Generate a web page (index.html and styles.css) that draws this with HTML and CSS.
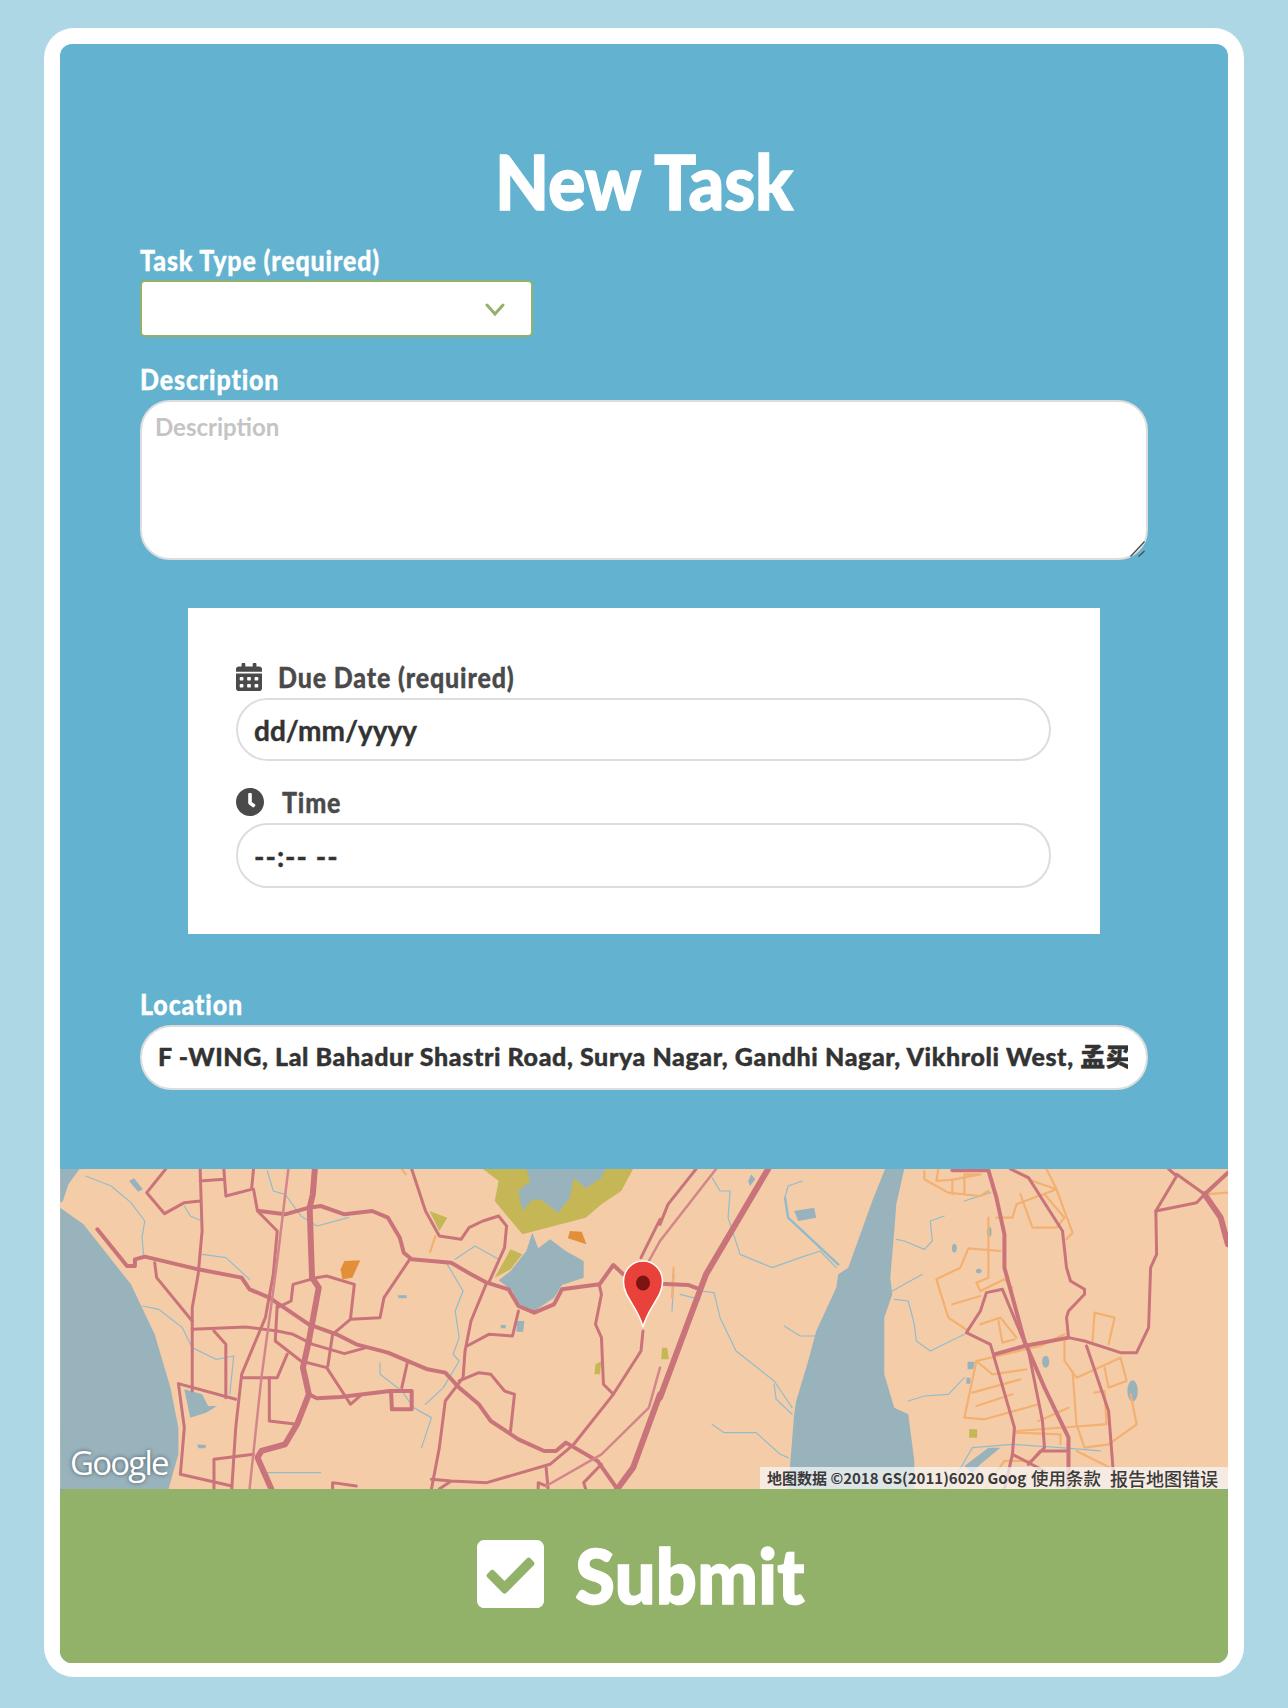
FILE: index.html
```html
<!DOCTYPE html>
<html lang="en">
<head>
<meta charset="utf-8">
<title>New Task</title>
<link rel="stylesheet" href="styles.css">
</head>
<body>
<main class="card">
  <div class="inner">
    <form class="form">
      <h1 class="title"><span>New Task</span></h1>
      <label class="label"><span>Task Type (required)</span></label>
      <div class="select"><svg class="chev" viewBox="0 0 20 14"><path d="M2 2l8 9 8-9" fill="none" stroke="#93b169" stroke-width="3" stroke-linecap="round"/></svg></div>
      <label class="label gap-a"><span>Description</span></label>
      <div class="area-wrap">
        <textarea class="area" placeholder="Description"></textarea>
        <svg class="grip" viewBox="0 0 15 16"><path d="M.5 15.500 14.500.5M8.500 15.500 14.500 10" fill="none" stroke="#4a4a4a" stroke-width="1.200"/></svg>
      </div>
      <section class="panel">
        <label class="label dark"><svg class="ico cal" viewBox="0 0 448 512" preserveAspectRatio="none"><path d="M0 464c0 26.5 21.5 48 48 48h352c26.5 0 48-21.5 48-48V192H0v272zm320-196c0-6.6 5.4-12 12-12h40c6.6 0 12 5.4 12 12v40c0 6.6-5.4 12-12 12h-40c-6.6 0-12-5.4-12-12v-40zm0 128c0-6.6 5.4-12 12-12h40c6.6 0 12 5.4 12 12v40c0 6.6-5.4 12-12 12h-40c-6.6 0-12-5.4-12-12v-40zM192 268c0-6.6 5.4-12 12-12h40c6.6 0 12 5.4 12 12v40c0 6.6-5.4 12-12 12h-40c-6.6 0-12-5.4-12-12v-40zm0 128c0-6.6 5.4-12 12-12h40c6.6 0 12 5.4 12 12v40c0 6.6-5.4 12-12 12h-40c-6.6 0-12-5.4-12-12v-40zM64 268c0-6.6 5.4-12 12-12h40c6.6 0 12 5.4 12 12v40c0 6.6-5.4 12-12 12H76c-6.6 0-12-5.4-12-12v-40zm0 128c0-6.6 5.4-12 12-12h40c6.6 0 12 5.4 12 12v40c0 6.6-5.4 12-12 12H76c-6.6 0-12-5.4-12-12v-40zM400 64h-48V16c0-8.8-7.2-16-16-16h-32c-8.8 0-16 7.2-16 16v48H160V16c0-8.8-7.2-16-16-16h-32c-8.8 0-16 7.2-16 16v48H48C21.5 64 0 85.5 0 112v48h448v-48c0-26.5-21.5-48-48-48z"/></svg><span>Due Date (required)</span></label>
        <input class="pill date" type="text" value="dd/mm/yyyy">
        <label class="label dark gap-b"><svg class="ico clk" viewBox="8 8 496 496"><path d="M256,8C119,8,8,119,8,256S119,504,256,504,504,393,504,256,393,8,256,8Zm92.49,313h0l-20,25a16,16,0,0,1-22.49,2.5h0l-67-49.72a40,40,0,0,1-15-31.23V112a16,16,0,0,1,16-16h32a16,16,0,0,1,16,16V256l58,42.5A16,16,0,0,1,348.49,321Z"/></svg><span>Time</span></label>
        <input class="pill time" type="text" value="--:-- --">
      </section>
      <label class="label gap-c"><span>Location</span></label>
      <input class="pill loc" type="text" value="F -WING, Lal Bahadur Shastri Road, Surya Nagar, Gandhi Nagar, Vikhroli West, 孟买, 马哈拉施特拉邦 400079 印度">
    </form>
    <div class="map">
      <svg class="map-svg" viewBox="0 0 1168 320" aria-hidden="true">
        <rect width="1168" height="320" fill="#f5cca8"/>
        <g transform="matrix(.3954 0 0 .3333 -20 -8)">
          <g fill="#99b3bd">
            <path d="M51 140 110 190 170 280 230 370 290 520 330 680 350 800 350 880 325 984H51Z"/>
            <path d="M51 24H100L72 70 58 120 51 125Z"/>
            <path d="M225 60 238 52 260 85 248 92Z"/>
            <path d="M365 685 410 700 425 735 448 735 420 755 380 770Z"/>
            <path d="M398 850 420 852 418 862 400 862Z"/>
            <path d="M905 403H927V412H907Z M1205 480H1225L1222 512H1205Z M1165 492H1178V502H1165Z"/>
          </g>
          <path d="M1120 24H1500L1470 90 1420 130 1380 170 1220 220 1150 120 1160 60Z" fill="#c6b756"/>
          <path d="M1230 24H1430L1420 50 1380 82 1350 50 1340 110 1310 155 1270 118 1245 115 1220 150 1210 90 1240 60Z" fill="#99b3bd"/>
          <path d="M1245 215 1260 262 1290 235 1330 270 1375 300 1375 350 1320 372 1300 410 1250 450 1210 430 1195 390 1160 358 1190 330 1230 270Z" fill="#99b3bd"/>
          <g fill="#c6b756">
            <path d="M985 150 1030 170 1010 210Z"/>
            <path d="M1190 265 1220 280 1190 325 1150 350Z"/>
            <path d="M1405 610 1420 600 1416 640H1402Z"/>
          </g>
          <g fill="#e38f3a">
            <path d="M770 300 810 298 790 350 765 355 760 325Z"/>
            <path d="M1340 210 1370 212 1382 250 1335 232Z"/>
          </g>
          <g class="river">
            <path d="M115 45 180 75 230 125 265 180 258 230 262 280M260 435 300 445 360 500 385 560 445 595 490 585 480 700"/>
            <path d="M365 135 380 165 410 180M410 280 470 290 530 355M575 30 590 90 620 100 660 165 700 195 780 170"/>
            <path d="M860 605 860 640 915 690 945 740 990 770 965 860M1030 310 1070 390 1050 450 1060 530 1045 580 1060 600 1020 680 975 730"/>
            <path d="M1050 295 1100 255 1160 295M570 935H710"/>
          </g>
          <path class="road-orange" d="M915 24 925 40M1000 225 987 272"/>
          <g class="road">
            <path class="w5" d="M695 24 690 100 682 140 688 350 705 380 680 540 665 620 680 700 650 790 620 850 560 870 550 890 585 984"/>
            <path d="M318 24 270 95 315 158 365 125 405 120M405 24 410 210 400 340 385 440 385 690M405 60 465 55M465 24 470 105 535 85 540 24"/>
            <path d="M540 85 550 150 600 210 590 340 570 470 510 640 495 800 485 984"/>
            <path class="w4" d="M555 150 620 160 680 140 710 135 770 160 840 150 880 170 910 230 920 275 940 295 1040 305 1090 340 1130 365 1185 385 1210 435 1250 455 1300 430 1320 385 1415 370 1450 312 1475 340"/>
            <path class="w4" d="M145 205 220 315 240 315 240 295 265 287 400 325 510 350 530 385 580 410 680 490 750 520 800 550 880 575 980 625 1025 635 1060 680 1110 730 1140 780 1210 835 1275 870 1305 870 1330 845 1410 900 1460 984"/>
            <path d="M290 305 295 350 385 480M385 505 520 498 600 510 640 520 690 550 770 578 825 560M440 510 470 550 470 710M350 668 495 715M350 668 365 800 355 940 485 975"/>
            <path d="M510 650 600 650 625 580M600 430 595 540 660 600 725 620 780 720M700 350 640 370 635 420 600 440M700 350 725 345 795 370 785 475 860 470 870 410 935 295M785 475 740 520 728 615"/>
            <path class="w4" d="M680 700 700 712 760 708 885 690 940 690 940 745 890 745 888 695"/>
            <path d="M780 720 785 730 810 705M580 650 580 780 650 790M930 600 915 680M1200 700 1190 810M1060 660 1110 635 1140 640 1175 690 1200 700"/>
            <path d="M1130 365 1090 480 1075 570 1070 650 1025 720 1010 860 990 984M1180 195 1160 165 1120 180 1085 200 1065 235 1010 225 975 150 940 24M1180 195 1175 260 1135 365M1080 555 1135 520 1195 525 1210 450"/>
            <path d="M1415 375 1420 400 1405 490 1420 530 1425 670 1450 700M1525 510 1520 570 1450 700 1350 850 1290 910 1130 965 1040 960 990 955M1040 960 1010 984M440 895 540 880M440 895 440 984M740 984 740 965 800 975"/>
            <path d="M1260 984 1260 965 1280 975M1280 920 1285 984M1380 984 1375 965 1420 910"/>
            <path class="w5" d="M1568 700 1500 920 1460 984"/>
            <path d="M1568 175 1520 290"/>
          </g>
          <path class="road-light" d="M628 24 600 300 560 650 530 984M1568 620 1540 740 1420 880 1280 975M1568 240 1540 300"/>
        </g>
        <g transform="matrix(.4005 0 0 .3333 600 -8)">
          <path d="M562 24H610L590 130 585 210 575 350 580 400 560 470 560 640 585 740 620 760 635 900 635 984H320L335 760 340 720 370 600 390 510 440 380 445 340 470 320 530 120Z" fill="#99b3bd"/>
          <g fill="#99b3bd">
            <path d="M335 150 385 140 390 170 345 180Z"/>
            <ellipse cx="822" cy="212" rx="6" ry="15"/><ellipse cx="735" cy="262" rx="6" ry="13"/><ellipse cx="963" cy="602" rx="9" ry="18"/><ellipse cx="1180" cy="690" rx="13" ry="32"/><ellipse cx="796" cy="330" rx="7" ry="7"/>
            <path d="M768 602H786L782 625H768Z M765 650H775V668H765Z M228 40 238 55 225 75 220 60Z"/>
            <path d="M760 915 820 860 850 860 800 910 780 935Z"/>
          </g>
          <g fill="#c6b756"><path d="M772 805H792V830H772Z M5 560 18 560 22 595 3 595Z"/></g>
          <g class="river">
            <path d="M130 50 150 90 175 90 170 170 200 280 280 320 350 290 400 270 440 320M312 110 320 75 355 60M100 390 135 395 150 470 190 570 285 660 330 740M285 670 290 715 330 760M130 790 160 815 240 815 300 880 320 890"/>
            <path class="rw" d="M312 110 320 170 400 260 445 310"/>
            <path d="M585 415 620 420 635 490 640 540 675 570 760 520M590 235 610 240 660 265 680 240 675 180 710 165M580 390 655 340M620 720 660 705 720 700 760 650M310 495 350 525 390 525"/>
            <path d="M720 984 780 860 880 850 1000 860 1100 870M760 120 825 95M35 340 30 450M50 400 100 415"/>
          </g>
          <g class="road-orange">
            <path d="M660 30 660 55 720 95 800 105 820 90M695 24 690 60 735 55 800 40 760 40 760 100M730 55 730 100M875 24 930 60 990 85 890 130 880 170 840 170"/>
            <path d="M900 100 930 200 990 200 1010 170 960 100M965 24 990 85 1030 215 1015 235M850 270 770 262 750 320 690 355 720 470 770 510M820 170 820 350 790 365 800 390 860 355 880 380"/>
            <path d="M730 430 800 405M800 490 850 470 890 530M845 480 855 545 885 535M1080 540 1085 455 1135 470 1120 550M790 600 760 770 810 775 945 730M790 600 950 555 1010 520M780 695 900 655M790 735 880 700M790 600 830 640 915 625"/>
            <path d="M1010 540 1010 600 1040 650 1150 590 1165 660 1120 680 1110 620M1030 630 1040 790 1060 860 1120 850 1190 790 1175 700M890 810 1110 790M1085 695 1110 690 1115 790M885 815 1000 820 1000 850M1020 740 945 780"/>
            <path d="M1360 100 1418 95M810 984 860 900 930 900M1040 870 1140 930M34 320 30 410"/>
          </g>
          <g class="road">
            <path class="w5" d="M270 24 115 340 0 710"/>
            <path d="M90 24 20 130 0 190"/>
            <path class="w4" d="M0 368 70 372 100 385"/>
            <path class="w4" d="M730 28H820L840 110 860 220 860 320 910 540 960 680 1020 830 1020 984"/>
            <path d="M875 24 920 50 1005 210 1015 320 1025 360 1060 385 1060 400 1020 450 1015 470 1020 530 1060 540 1150 575 1190 575 1220 500 1225 320 1240 280 1238 150 1290 45 1270 24"/>
            <path d="M1238 150 1340 125 1360 100 1290 40"/>
            <path class="w4" d="M1360 100 1418 35"/>
            <path class="w5" d="M1360 100 1400 170 1418 250"/>
            <path d="M765 515 800 450 815 395 855 385 910 545M765 515 825 550 885 800 880 880 860 984"/>
            <path class="w4" d="M835 580 910 555 1020 530"/>
            <path d="M920 570 955 780 960 860 920 910M1065 555 1120 750 1135 984M880 880 960 930M920 910 950 870 1020 870"/>
          </g>
          <path class="road-light" d="M140 24 0 240"/>
        </g>
        <g class="pin">
          <path d="M583 92C572 92 563.500 101 563.500 113C563.500 128 578 138 583 158C588 138 602.500 128 602.500 113C602.500 101 594 92 583 92Z" fill="#e8423a" stroke="#fff" stroke-width="1.500"/>
          <ellipse cx="583" cy="114" rx="7" ry="7.500" fill="#7c1512"/>
        </g>
      </svg>
      <span class="google">Google</span>
      <div class="attrib">
        <span class="a-data">地图数据 ©2018 GS(2011)6020 Google</span>
        <span class="a-terms">使用条款</span>
        <span class="a-report">报告地图错误</span>
      </div>
    </div>
    <button class="submit" type="button">
      <svg class="check" viewBox="0 32 448 448" preserveAspectRatio="none"><path d="M400 480H48c-26.510 0-48-21.490-48-48V80c0-26.510 21.490-48 48-48h352c26.510 0 48 21.490 48 48v352c0 26.510-21.490 48-48 48zm-204.686-98.059l184-184c6.248-6.248 6.248-16.379 0-22.627l-22.627-22.627c-6.248-6.248-16.379-6.249-22.628 0L184 302.745l-70.059-70.059c-6.248-6.248-16.379-6.248-22.628 0l-22.627 22.627c-6.248 6.248-6.248 16.379 0 22.627l104 104c6.249 6.250 16.379 6.250 22.628.001z" fill="#fff"/></svg>
      <span>Submit</span>
    </button>
  </div>
</main>
</body>
</html>
```

FILE: styles.css
```css
* { box-sizing: border-box; }
html, body { margin: 0; }
body {
  background: #aed7e6;
  font-family: "Lato", "Noto Sans CJK SC", sans-serif;
  font-weight: 700;
}
.card {
  margin: 28px 44px 32px;
  padding: 16px 16px 14px;
  background: #fff;
  border-radius: 30px;
}
.inner {
  background: #63b2cf;
  border-radius: 12px;
  overflow: hidden;
}
.form {
  display: flex;
  flex-direction: column;
  padding: 89px 80px 79px;
}
.title {
  margin: 0 0 19px;
  height: 96px;
  text-align: center;
  color: #fff;
  font-size: 70px;
  font-weight: 900;
  line-height: 96px;
}
.title span { display: inline-block; transform: scaleY(1.08); letter-spacing: -.2px; -webkit-text-stroke: 1.200px #fff; }
.label {
  display: flex;
  align-items: center;
  height: 24px;
  margin-bottom: 9px;
  color: #fff;
  font-size: 25px;
  font-weight: 900;
  line-height: 24px;
}
.label span { display: inline-block; transform: scaleY(1.1); letter-spacing: .85px; -webkit-text-stroke: .3px currentColor; }
.dark { color: #4a4a4a; }
.gap-a { margin-top: 30px; }
.gap-b { margin-top: 29px; }
.gap-c { margin-top: 58px; }
.select {
  position: relative;
  width: 393px;
  height: 57px;
  margin-top: -1px;
  background: #fff;
  border: 2px solid #93b169;
  border-radius: 5px;
}
.chev { position: absolute; right: 26px; top: 21px; width: 20px; height: 14px; }
.area-wrap { position: relative; }
.grip { position: absolute; right: 3px; bottom: 3px; width: 15px; height: 16px; }
.area {
  display: block;
  width: 100%;
  height: 160px;
  padding: 10px 13px;
  font: 700 24px "Lato", sans-serif;
  color: #333;
  background: #fff;
  border: 2px solid #ddd;
  border-radius: 30px;
  outline: 0;
  resize: none;
}
.area::placeholder { color: #c4c4c4; opacity: 1; }
.panel {
  margin: 48px 48px 0;
  padding: 57px 49px 46px 48px;
  background: #fff;
}
.pill {
  display: block;
  width: 100%;
  padding: 0 16px;
  font: 700 28px "Lato", "Noto Sans CJK SC", sans-serif;
  color: #333;
  background: #fff;
  border: 2px solid #ddd;
  border-radius: 32px;
  outline: 0;
  -webkit-text-stroke: .4px #333;
}
.date { height: 63px; }
.time { height: 65px; letter-spacing: 1px; }
.loc { height: 65px; padding: 0 18px 6px 16px; font-size: 25px; font-weight: 900; letter-spacing: .6px; }
.ico { flex: none; fill: #4a4a4a; }
.cal { width: 26px; height: 28px; margin-right: 16px; }
.clk { width: 28px; height: 28px; margin-right: 18px; }
.map { position: relative; height: 320px; overflow: hidden; }
.map-svg { display: block; width: 100%; height: 100%; }
.road path, .road-light, .road-light path, .road-orange path, .road-orange, .river path, .river {
  fill: none;
  stroke-linejoin: round;
  stroke-linecap: round;
  vector-effect: non-scaling-stroke;
}
.road path { stroke: #c9747a; stroke-width: 3px; }
.road .w4 { stroke-width: 4px; }
.road .w5 { stroke-width: 6px; }
.road-light { stroke: #d3868a; stroke-width: 2.500px; }
.road-orange path, .road-orange { stroke: #f3b071; stroke-width: 2.200px; }
.river path { stroke: #93bccb; stroke-width: 1.200px; }
.river .rw { stroke-width: 2.500px; }
.google {
  position: absolute;
  left: 10px;
  bottom: 4px;
  color: #fff;
  font: 400 33px "Open Sans", sans-serif;
  letter-spacing: -1.800px;
  text-shadow: 0 0 4px rgba(0,0,0,.5);
}
.attrib {
  position: absolute;
  right: 0;
  bottom: 0;
  width: 468px;
  height: 22px;
  background: rgba(245,245,245,.75);
  color: #3a3a3a;
  font: 700 15px "Noto Sans CJK SC", sans-serif;
  line-height: 22px;
  overflow: hidden;
}
.attrib span { position: absolute; top: 0; white-space: nowrap; }
.a-data { left: 7px; width: 260px; overflow: hidden; }
.a-terms { left: 271px; font-weight: 500; font-size: 17.500px; }
.a-report { left: 350px; font-weight: 500; font-size: 18px; }
.submit {
  display: flex;
  align-items: center;
  justify-content: center;
  gap: 31px;
  width: 100%;
  height: 174px;
  padding: 0 6px 4px 0;
  background: #92b169;
  border: 0;
  border-radius: 4px 4px 0 0;
  color: #fff;
  font: 900 72px "Lato", sans-serif;
}
.submit span { display: inline-block; transform: scaleY(1.07); -webkit-text-stroke: 1.500px #fff; letter-spacing: .3px; }
.check { width: 67px; height: 68px; flex: none; }
```
